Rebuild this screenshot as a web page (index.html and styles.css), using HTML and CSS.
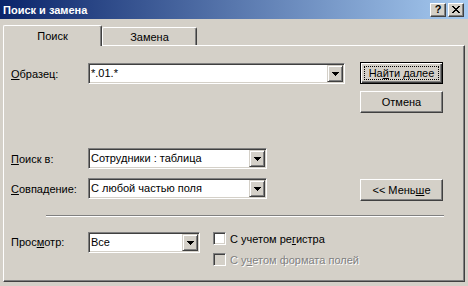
FILE: index.html
```html
<!DOCTYPE html>
<html lang="ru">
<head>
    <meta charset="UTF-8">
    <title>Поиск и замена</title>
    <link rel="stylesheet" href="styles.css">
</head>
<body>
    <div class="titlebar">
        <span class="title">Поиск и замена</span>
        <div class="caption-buttons">
            <span class="cap-btn">?</span>
            <span class="cap-btn">
                <svg width="8" height="7" viewBox="0 0 8 7" shape-rendering="crispEdges">
                    <path d="M0 0h2v1H0zM6 0h2v1H6zM1 1h2v1H1zM5 1h2v1H5zM2 2h4v1H2zM3 3h2v1H3zM2 4h4v1H2zM1 5h2v1H1zM5 5h2v1H5zM0 6h2v1H0zM6 6h2v1H6z" fill="#000"/>
                </svg>
            </span>
        </div>
    </div>

    <div class="tabs">
        <div class="tab active">Поиск</div>
        <div class="tab">Замена</div>
    </div>

    <div class="panel">
        <div class="top">
            <div class="fields">
                <div class="row row-pattern">
                    <label class="field-label"><u>О</u>бразец:</label>
                    <div class="combo wide">
                        <span class="value">*.01.*</span>
                        <span class="drop"><svg width="7" height="4" viewBox="0 0 7 4" shape-rendering="crispEdges"><path d="M0 0h7v1H0zM1 1h5v1H1zM2 2h3v1H2zM3 3h1v1H3z" fill="#000"/></svg></span>
                    </div>
                </div>
                <div class="row row-lookin">
                    <label class="field-label"><u>П</u>оиск в:</label>
                    <div class="combo mid">
                        <span class="value">Сотрудники : таблица</span>
                        <span class="drop"><svg width="7" height="4" viewBox="0 0 7 4" shape-rendering="crispEdges"><path d="M0 0h7v1H0zM1 1h5v1H1zM2 2h3v1H2zM3 3h1v1H3z" fill="#000"/></svg></span>
                    </div>
                </div>
                <div class="row row-match">
                    <label class="field-label"><u>С</u>овпадение:</label>
                    <div class="combo mid">
                        <span class="value">С любой частью поля</span>
                        <span class="drop"><svg width="7" height="4" viewBox="0 0 7 4" shape-rendering="crispEdges"><path d="M0 0h7v1H0zM1 1h5v1H1zM2 2h3v1H2zM3 3h1v1H3z" fill="#000"/></svg></span>
                    </div>
                </div>
            </div>
            <div class="buttons">
                <div class="btn default"><span class="focus">На<u>й</u>ти далее</span></div>
                <div class="btn">Отмена</div>
                <div class="btn btn-less">&lt;&lt; Мень<u>ш</u>е</div>
            </div>
        </div>

        <div class="separator"></div>

        <div class="bottom">
            <label class="field-label">Прос<u>м</u>отр:</label>
            <div class="combo small">
                <span class="value">Все</span>
                <span class="drop"><svg width="7" height="4" viewBox="0 0 7 4" shape-rendering="crispEdges"><path d="M0 0h7v1H0zM1 1h5v1H1zM2 2h3v1H2zM3 3h1v1H3z" fill="#000"/></svg></span>
            </div>
            <div class="checks">
                <div class="check-row">
                    <span class="checkbox"></span>
                    <span>С учетом ре<u>г</u>истра</span>
                </div>
                <div class="check-row disabled">
                    <span class="checkbox"></span>
                    <span>С у<u>ч</u>етом формата полей</span>
                </div>
            </div>
        </div>
    </div>
</body>
</html>
```

FILE: styles.css
```css
* {
    box-sizing: border-box;
}
body {
    margin: 0;
    width: 468px;
    height: 286px;
    overflow: hidden;
    background: #d4d0c8;
    color: #000;
    font-family: "Liberation Sans", Arial, sans-serif;
    font-size: 11px;
}
u {
    text-decoration-thickness: 1px;
    text-underline-offset: 1px;
}

/* title bar */
.titlebar {
    height: 19px;
    display: flex;
    align-items: center;
    justify-content: space-between;
    padding: 0 4px 0 3px;
    background: linear-gradient(to right, #0a246a, #a6caf0);
}
.title {
    color: #fff;
    font-weight: bold;
    font-size: 11px;
    padding-top: 1px;
}
.caption-buttons {
    display: flex;
    gap: 2px;
}
.cap-btn {
    width: 16px;
    height: 14px;
    display: flex;
    align-items: center;
    justify-content: center;
    background: #d4d0c8;
    border: 1px solid;
    border-color: #fff #404040 #404040 #fff;
    box-shadow: inset -1px -1px #808080;
    font-weight: bold;
    font-size: 11px;
    line-height: 1;
}

/* tabs */
.tabs {
    height: 26px;
    display: flex;
    align-items: flex-end;
    padding: 6px 0 0 3px;
}
.tab {
    width: 95px;
    height: 18px;
    display: flex;
    align-items: center;
    justify-content: center;
    background: #d4d0c8;
    border-top: 1px solid #fff;
    border-left: 1px solid #fff;
    border-right: 1px solid #404040;
    box-shadow: inset -1px 0 #808080;
    border-top-left-radius: 2px;
    border-top-right-radius: 2px;
}
.tab.active {
    position: relative;
    z-index: 1;
    width: 99px;
    height: 21px;
    margin-bottom: -1px;
    padding-bottom: 1px;
}

/* panel */
.panel {
    margin-left: 3px;
    width: 462px;
    height: 237px;
    border: 1px solid;
    border-color: #fff #404040 #404040 #fff;
    box-shadow: inset -1px -1px #808080;
    padding: 16px 0 0 7px;
}
.top {
    display: flex;
}
.fields {
    width: 334px;
    padding-top: 1px;
}
.row {
    display: flex;
    align-items: center;
    height: 21px;
}
.row-lookin {
    margin-top: 64px;
}
.row-match {
    margin-top: 9px;
}
.field-label {
    width: 77px;
    flex-shrink: 0;
}

/* combo boxes */
.combo {
    height: 21px;
    display: flex;
    padding: 1px;
    background: #fff;
    border: 1px solid;
    border-color: #808080 #fff #fff #808080;
    box-shadow: inset 1px 1px #404040, inset -1px -1px #d4d0c8;
}
.combo.wide {
    width: 257px;
}
.combo.mid {
    width: 179px;
}
.combo.small {
    width: 112px;
}
.combo .value {
    flex: 1;
    padding-left: 1px;
    line-height: 17px;
    white-space: nowrap;
    overflow: hidden;
}
.drop {
    width: 16px;
    height: 17px;
    display: flex;
    align-items: center;
    justify-content: center;
    background: #d4d0c8;
    border: 1px solid;
    border-color: #d4d0c8 #404040 #404040 #d4d0c8;
    box-shadow: inset 1px 1px #fff, inset -1px -1px #808080;
}

/* push buttons */
.buttons {
    margin-left: 15px;
    width: 83px;
    display: flex;
    flex-direction: column;
    gap: 7px;
}
.btn {
    height: 22px;
    display: flex;
    align-items: center;
    justify-content: center;
    background: #d4d0c8;
    border: 1px solid;
    border-color: #fff #404040 #404040 #fff;
    box-shadow: inset -1px -1px #808080;
}
.btn.default {
    border: 1px solid #000;
    box-shadow: inset 1px 1px #fff, inset -1px -1px #404040, inset -2px -2px #808080;
    align-items: stretch;
}
.focus {
    flex: 1;
    margin: 3px;
    display: flex;
    align-items: center;
    justify-content: center;
    border: 1px dotted #000;
}
.btn-less {
    margin-top: 59px;
}

.separator {
    margin: 14px 0 0 35px;
    width: 398px;
    height: 2px;
    border-top: 1px solid #808080;
    border-bottom: 1px solid #fff;
}

/* bottom row */
.bottom {
    display: flex;
    align-items: flex-start;
    margin-top: 15px;
}
.bottom .field-label {
    height: 21px;
    line-height: 21px;
}
.checks {
    margin-left: 13px;
    display: flex;
    flex-direction: column;
    gap: 8px;
}
.check-row {
    height: 13px;
    display: flex;
    align-items: center;
    gap: 4px;
    white-space: nowrap;
}
.checkbox {
    width: 13px;
    height: 13px;
    background: #fff;
    border: 1px solid;
    border-color: #808080 #fff #fff #808080;
    box-shadow: inset 1px 1px #404040, inset -1px -1px #d4d0c8;
}
.check-row.disabled {
    color: #808080;
    text-shadow: 1px 1px #fff;
}
.check-row.disabled .checkbox {
    background: #d4d0c8;
}
```
